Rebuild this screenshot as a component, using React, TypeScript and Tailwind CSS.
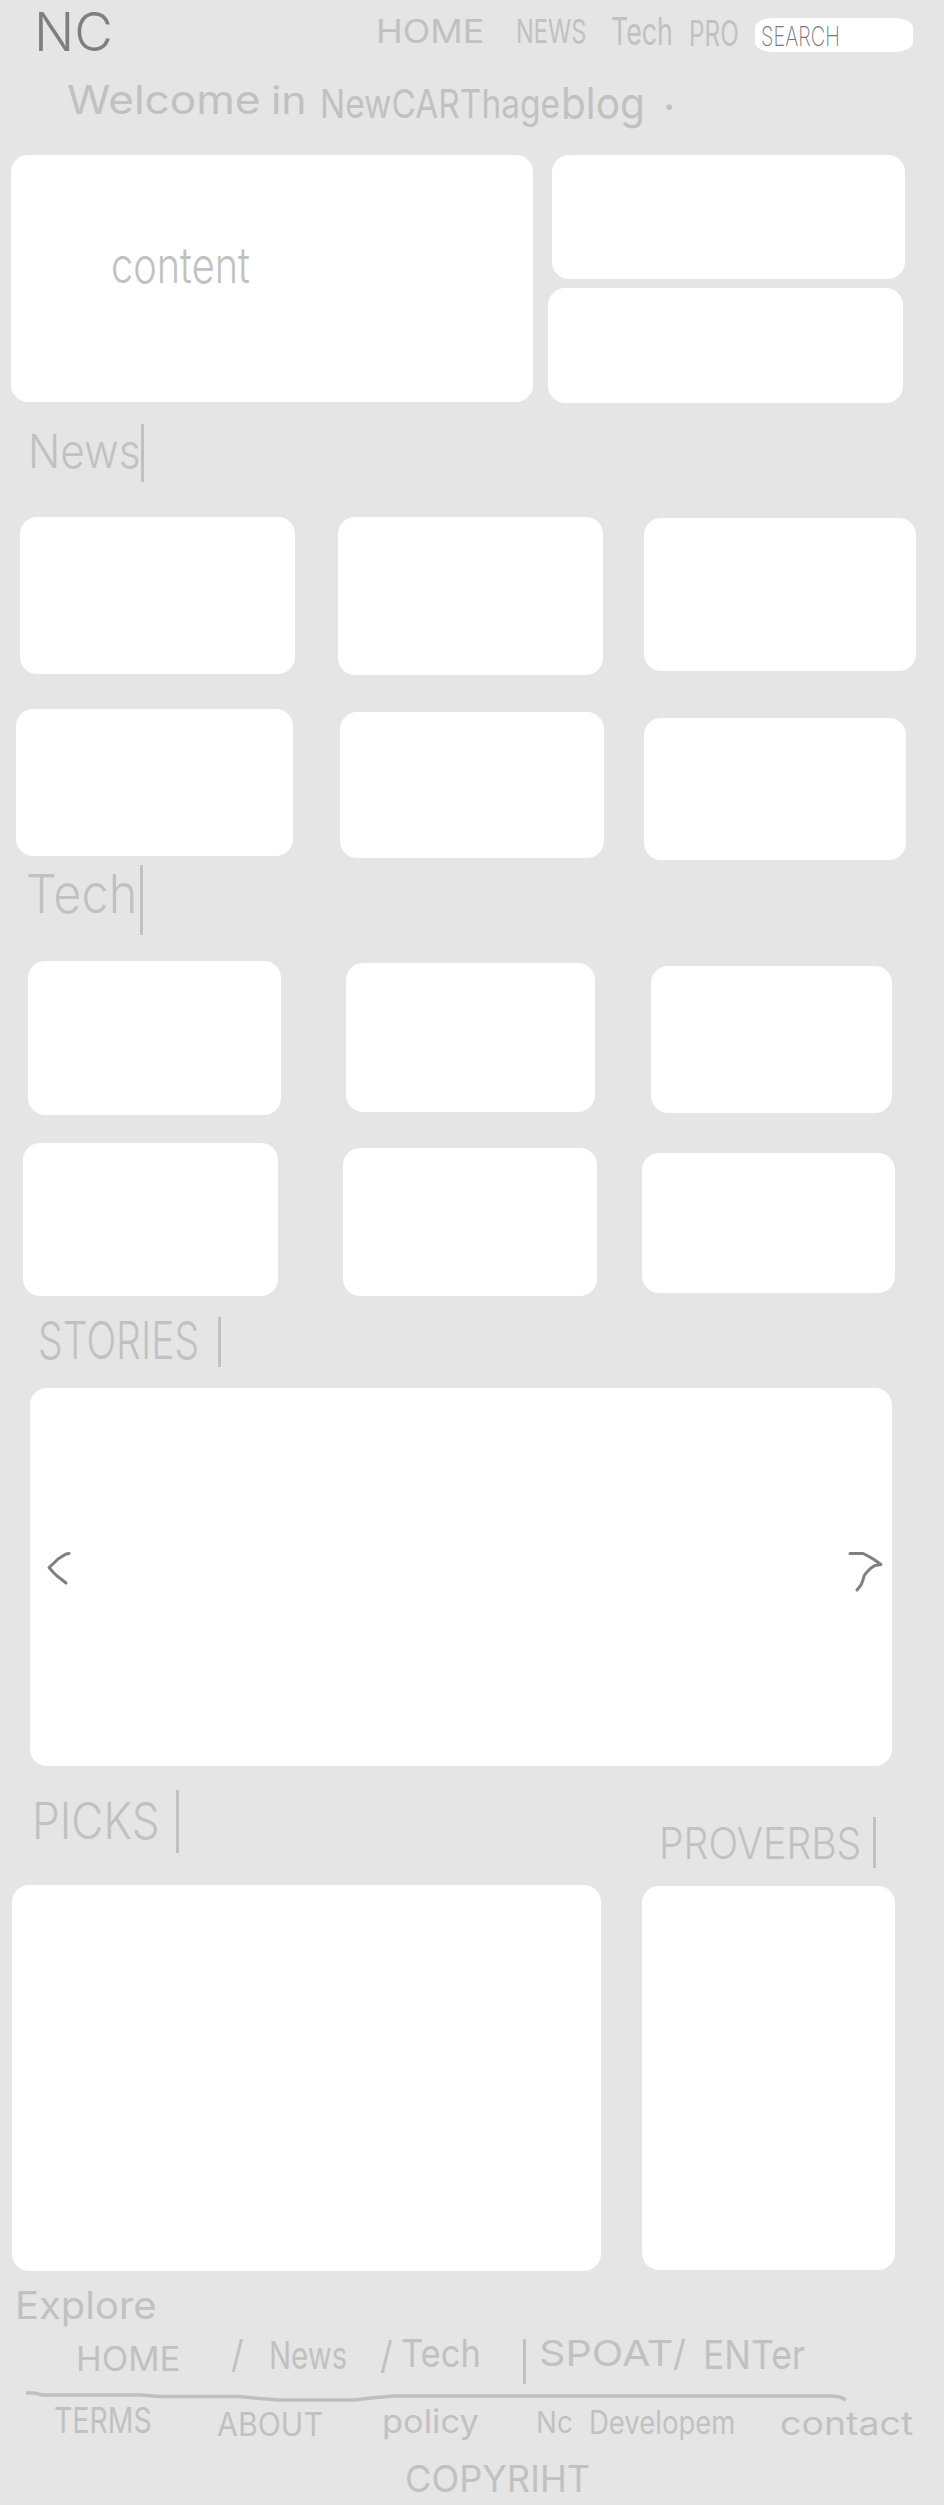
import { useLayoutEffect, useRef, useState, type ReactNode } from "react";

/** A word stretched horizontally so that it fills the width of its box. */
function Word({ children, className }: { children: string; className: string }) {
  const box = useRef<HTMLSpanElement>(null);
  const ink = useRef<HTMLSpanElement>(null);
  const [scale, setScale] = useState(1);

  useLayoutEffect(() => {
    if (box.current && ink.current && ink.current.offsetWidth > 0) {
      setScale(box.current.offsetWidth / ink.current.offsetWidth);
    }
  }, []);

  return (
    <span ref={box} className={`block shrink-0 leading-none whitespace-nowrap ${className}`}>
      <span ref={ink} className="inline-block origin-left" style={{ transform: `scaleX(${scale})` }}>
        {children}
      </span>
    </span>
  );
}

function Card({ className, children }: { className: string; children?: ReactNode }) {
  return <div className={`shrink-0 rounded-[17px] bg-white ${className}`}>{children}</div>;
}

function Bar({ className }: { className: string }) {
  return <span className={`block w-[3px] shrink-0 bg-[#c1c1c1] ${className}`} />;
}

export default function App() {
  return (
    <div className="flex h-[2505px] w-[944px] flex-col overflow-hidden bg-[#e5e5e5] font-['Inter','Liberation_Sans',sans-serif] text-[#c1c1c1]">
      <header className="flex h-[66px] shrink-0 items-start">
        <Word className="mt-[6px] ml-[34px] w-[79px] text-[53px] font-light text-[#7f7f7f]">NC</Word>
        <nav className="ml-[263px] flex items-start">
          <Word className="mt-[15px] w-[108px] text-[33px]">HOME</Word>
          <Word className="mt-[15px] ml-[32px] w-[70px] text-[33px]">NEWS</Word>
          <Word className="mt-[12px] ml-[25px] w-[62px] text-[38px]">Tech</Word>
          <Word className="mt-[16px] ml-[16px] w-[50px] text-[35px]">PRO</Word>
        </nav>
        <div className="mt-[18px] ml-[16px] flex h-[34px] w-[158px] shrink-0 items-start rounded-[18px/10px] bg-white pt-[5px] pl-[6px]">
          <Word className="w-[79px] text-[27px] font-extralight text-[#777777]">SEARCH</Word>
        </div>
      </header>

      <h1 className="flex h-[89px] shrink-0 items-start">
        <Word className="mt-[14px] ml-[67px] w-[194px] text-[40px]">Welcome</Word>
        <Word className="mt-[15px] ml-[10px] w-[36px] text-[38px]">in</Word>
        <Word className="mt-[18px] ml-[13px] w-[240px] text-[40px]">NewCARThage</Word>
        <Word className="mt-[15px] ml-[1px] w-[84px] text-[44px]">blog</Word>
        <Word className="mt-[8px] ml-[18px] w-[12px] text-[42px]">.</Word>
      </h1>

      <section className="flex h-[248px] shrink-0 items-start">
        <Card className="ml-[11px] h-[247px] w-[522px] pt-[85px] pl-[100px]">
          <Word className="w-[139px] text-[50px] font-light">content</Word>
        </Card>
        <div className="ml-[15px] flex flex-col gap-[9px]">
          <Card className="ml-[4px] h-[124px] w-[353px]" />
          <Card className="h-[115px] w-[355px]" />
        </div>
      </section>

      <section className="shrink-0">
        <h2 className="flex h-[114px] items-start font-light">
          <Word className="mt-[24px] ml-[28px] w-[113px] text-[47px]">News</Word>
          <Bar className="mt-[21px] h-[58px]" />
        </h2>
        <div className="flex h-[192px] items-start">
          <Card className="ml-[20px] h-[157px] w-[275px]" />
          <Card className="ml-[43px] h-[158px] w-[265px]" />
          <Card className="mt-px ml-[41px] h-[153px] w-[272px]" />
        </div>
        <div className="flex h-[151px] items-start">
          <Card className="ml-[16px] h-[147px] w-[277px]" />
          <Card className="mt-[3px] ml-[47px] h-[146px] w-[264px]" />
          <Card className="mt-[9px] ml-[40px] h-[142px] w-[262px]" />
        </div>
      </section>

      <section className="shrink-0">
        <h2 className="flex h-[101px] items-start font-light">
          <Word className="mt-[7px] ml-[26px] w-[111px] text-[54px]">Tech</Word>
          <Bar className="mt-[5px] ml-[3px] h-[70px]" />
        </h2>
        <div className="flex h-[182px] items-start">
          <Card className="ml-[28px] h-[154px] w-[253px]" />
          <Card className="mt-[2px] ml-[65px] h-[149px] w-[249px]" />
          <Card className="mt-[5px] ml-[56px] h-[147px] w-[241px]" />
        </div>
        <div className="flex h-[153px] items-start">
          <Card className="ml-[23px] h-[153px] w-[255px]" />
          <Card className="mt-[5px] ml-[65px] h-[148px] w-[254px]" />
          <Card className="mt-[10px] ml-[45px] h-[140px] w-[253px]" />
        </div>
      </section>

      <section className="shrink-0">
        <h2 className="flex h-[92px] items-start font-light">
          <Word className="mt-[19px] ml-[38px] w-[161px] text-[52px]">STORIES</Word>
          <Bar className="mt-[21px] ml-[19px] h-[50px]" />
        </h2>
        <Card className="ml-[30px] flex h-[378px] w-[862px] items-start justify-between pt-[162px] pr-[6px] pl-[15px]">
          <button type="button" aria-label="Previous story">
            <svg width="30" height="36" viewBox="0 0 30 36" fill="none" stroke="#7f7f7f" strokeWidth="3" strokeLinecap="round" strokeLinejoin="round">
              <path d="M24 3.500 21 4 13 9 9 13 4 17.500 8 22 12 26 16 29 21 33" />
            </svg>
          </button>
          <button type="button" aria-label="Next story">
            <svg width="40" height="43" viewBox="0 0 40 43" fill="none" stroke="#7f7f7f" strokeWidth="3" strokeLinecap="round" strokeLinejoin="round">
              <path d="M4 3.500H17L22 6 28 9.500 35 14.500 29 15.500 25 18 20 23 18 26 17 30 15 35 11 40" />
            </svg>
          </button>
        </Card>
      </section>

      <section className="shrink-0">
        <div className="flex h-[119px] items-start font-light">
          <h2 className="flex items-start">
            <Word className="mt-[30px] ml-[32px] w-[128px] text-[50px]">PICKS</Word>
            <Bar className="mt-[24px] ml-[16px] h-[63px]" />
          </h2>
          <h2 className="ml-[480px] flex items-start">
            <Word className="mt-[56px] w-[202px] text-[43px]">PROVERBS</Word>
            <Bar className="mt-[51px] ml-[12px] h-[51px]" />
          </h2>
        </div>
        <div className="flex h-[386px] items-start">
          <Card className="ml-[12px] h-[386px] w-[589px]" />
          <Card className="mt-px ml-[41px] h-[384px] w-[253px]" />
        </div>
      </section>

      <footer className="shrink-0">
        <h3 className="flex h-[61px] items-start">
          <Word className="mt-[15px] ml-[15px] w-[142px] text-[38px]">Explore</Word>
        </h3>
        <nav className="flex h-[56px] items-start">
          <Word className="mt-[10px] ml-[76px] w-[104px] text-[34px]">HOME</Word>
          <Word className="mt-[3px] ml-[51px] w-[13px] text-[38px]">/</Word>
          <Word className="mt-[4px] ml-[25px] w-[78px] text-[38px]">News</Word>
          <Word className="mt-[4px] ml-[33px] w-[13px] text-[38px]">/</Word>
          <Word className="mt-[2px] ml-[8px] w-[80px] text-[38px]">Tech</Word>
          <Bar className="mt-[7px] ml-[42px] h-[45px]" />
          <Word className="mt-[3px] ml-[13px] w-[134px] text-[36px]">SPOAT</Word>
          <Word className="mt-[3px] w-[13px] text-[36px]">/</Word>
          <Word className="mt-[3px] ml-[17px] w-[102px] text-[40px]">ENTer</Word>
        </nav>
        <svg className="block" width="944" height="14" viewBox="0 0 944 14" fill="none" stroke="#bfbfbf" strokeWidth="3.500">
          <path d="M26 5H34L42 7H140L160 8.500H240L254 10 280 12H355L375 9.500 395 8H833L840 9 846 12" />
        </svg>
        <div className="flex h-[53px] items-start">
          <Word className="ml-[54px] w-[98px] text-[36px]">TERMS</Word>
          <Word className="mt-[7px] ml-[65px] w-[106px] text-[32px]">ABOUT</Word>
          <Word className="mt-[3px] ml-[59px] w-[97px] text-[33px]">policy</Word>
          <Word className="mt-[5px] ml-[57px] w-[37px] text-[30px]">Nc</Word>
          <Word className="mt-[5px] ml-[16px] w-[146px] text-[32px]">Developem</Word>
          <Word className="mt-[5px] ml-[45px] w-[133px] text-[33px]">contact</Word>
        </div>
        <div className="flex h-[50px] items-start">
          <Word className="mt-[5px] ml-[405px] w-[185px] text-[37px]">COPYRIHT</Word>
        </div>
      </footer>
    </div>
  );
}
